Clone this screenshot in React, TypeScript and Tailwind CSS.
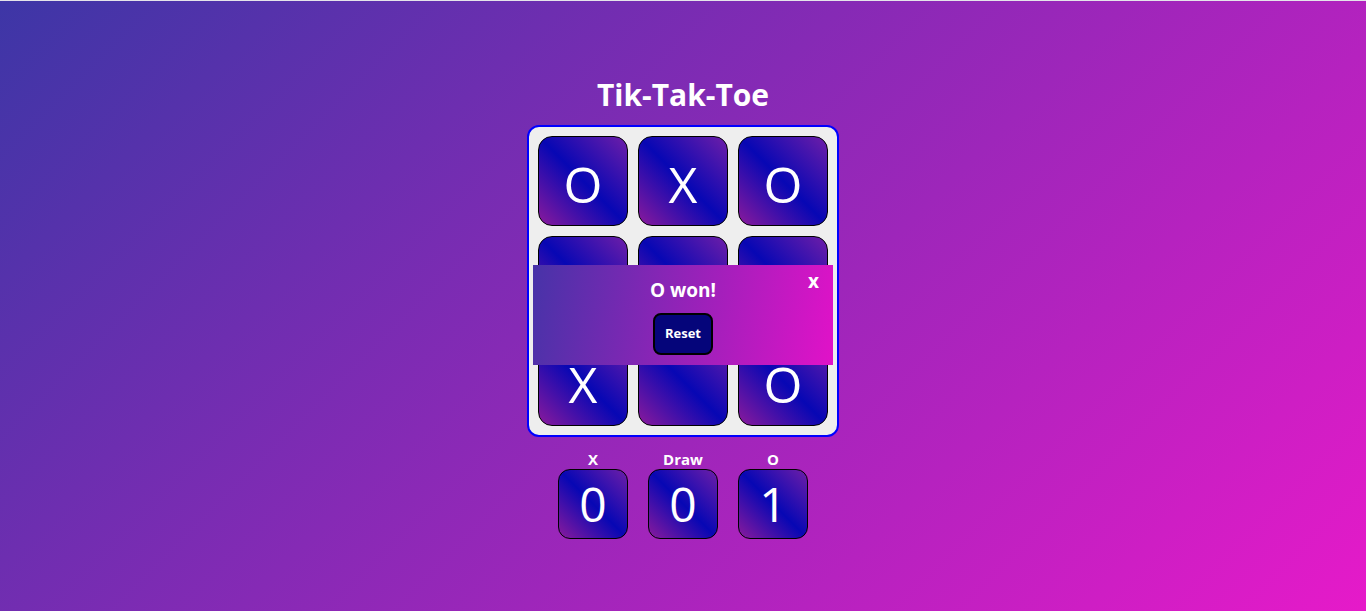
import { useState } from 'react'

const cellBg =
  'bg-[linear-gradient(45deg,#8a1a9c_0%,#0707b4_50%,#6e1ea8_100%)]'

function Cell({ value }: { value: string }) {
  return (
    <button
      className={`w-[90px] h-[90px] rounded-[14px] border border-black ${cellBg} text-white text-[50px] leading-none flex items-center justify-center pt-[6px]`}
    >
      {value}
    </button>
  )
}

function Score({ label, value }: { label: string; value: number }) {
  return (
    <div className="flex flex-col items-center">
      <span className="text-white font-bold text-[15px] leading-[20px]">{label}</span>
      <div
        className={`w-[70px] h-[70px] rounded-[12px] border border-black ${cellBg} text-white text-[48px] leading-none flex items-center justify-center`}
      >
        {value}
      </div>
    </div>
  )
}

export default function App() {
  const [open, setOpen] = useState(true)
  // middle row sits under the result banner
  const board = ['O', 'X', 'O', '', '', '', 'X', '', 'O']

  return (
    <div
      className="h-[611px] w-full overflow-hidden bg-[linear-gradient(135deg,#3d36a6,#e61ac9)]"
      style={{ fontFamily: '"Open Sans", "Noto Sans", sans-serif' }}
    >
      <div className="h-px bg-[#e4e4ea]" />
      <div className="flex flex-col items-center pt-[74px]">
        <h1 className="text-white font-bold text-[30px] leading-[40px] mb-[10px]">Tik-Tak-Toe</h1>

        {/* Board */}
        <div className="relative border-2 border-[#0000ff] rounded-[12px] bg-[#eeeeee] p-[9px] grid grid-cols-3 gap-[10px]">
          {board.map((v, i) => (
            <Cell key={i} value={v} />
          ))}

          {open && (
            <div className="absolute left-[4px] top-[138px] w-[300px] h-[100px] bg-[linear-gradient(100deg,#4733a8,#e112c8)] flex flex-col items-center">
              <button
                onClick={() => setOpen(false)}
                className="absolute right-[14px] top-[4px] text-white font-bold text-[19px] leading-[24px]"
              >
                x
              </button>
              <p className="text-white font-bold text-[19px] leading-[26px] mt-[12px]">O won!</p>
              <button className="mt-[10px] w-[60px] h-[42px] rounded-[8px] border-2 border-black bg-[#05057a] text-white font-bold text-[13px]">
                Reset
              </button>
            </div>
          )}
        </div>

        {/* Scores */}
        <div className="flex gap-[20px] mt-[12px]">
          <Score label="X" value={0} />
          <Score label="Draw" value={0} />
          <Score label="O" value={1} />
        </div>
      </div>
    </div>
  )
}
